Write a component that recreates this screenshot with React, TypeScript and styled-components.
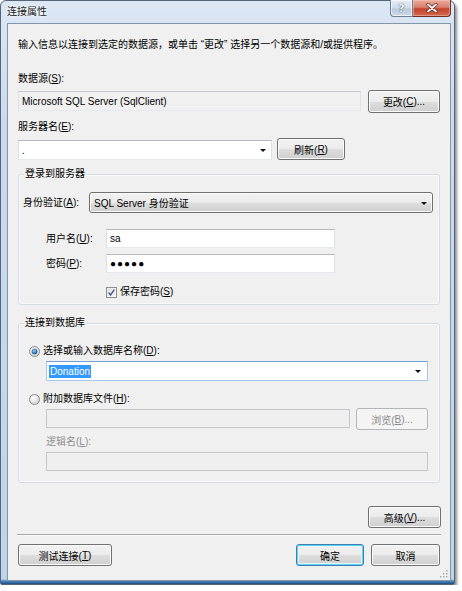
import React from "react";
import styled, { createGlobalStyle, css } from "styled-components";

const GlobalStyle = createGlobalStyle`
  html, body { margin: 0; padding: 0; background: #ffffff; }
  body {
    font-family: "Liberation Sans", "Noto Sans CJK SC", sans-serif;
    font-size: 10px;
    color: #000;
  }
  * { box-sizing: border-box; }
`;

const FONT = `"Liberation Sans", "Noto Sans CJK SC", sans-serif`;

const Window = styled.div`
  width: 455px;
  height: 585px;
  display: flex;
  flex-direction: column;
  padding: 0 3px 3px 6px;
  border: 1px solid #56667a;
  border-radius: 6px 6px 2px 2px;
  background: linear-gradient(
    to bottom,
    #dce7f4 0,
    #cbdbed 120px,
    #bfd4ea calc(100% - 5px),
    #4f86bf calc(100% - 3px),
    #1d4d84 100%
  );
  box-shadow: 2px 3px 3px rgba(0, 0, 0, 0.45);
`;

const TitleBar = styled.div`
  height: 22px;
  display: flex;
  align-items: flex-start;
`;

const Title = styled.div`
  padding-top: 4px;
  font-size: 10px;
  line-height: 14px;
  color: #1b1b1b;
  text-shadow: 0 0 5px #ffffff, 0 0 3px #ffffff;
`;

const Caption = styled.div`
  margin-left: auto;
  margin-top: -1px;
  display: flex;
`;

const CaptionButton = styled.div<{ $close?: boolean }>`
  height: 17px;
  width: ${(p) => (p.$close ? 38 : 23)}px;
  display: flex;
  align-items: center;
  justify-content: center;
  border: 1px solid ${(p) => (p.$close ? "#6b2f27" : "#6d7f94")};
  border-top: none;
  ${(p) =>
    p.$close
      ? css`
          border-radius: 0 0 4px 0;
          border-left: none;
          background: linear-gradient(#e9a99b 0%, #d8806d 45%, #c4432b 55%, #d26a4c 100%);
          box-shadow: inset 0 0 0 1px rgba(255, 210, 200, 0.45);
        `
      : css`
          border-radius: 0 0 0 4px;
          background: linear-gradient(#e4ecf5 0%, #d3dfeb 45%, #bccbdc 55%, #c9d8e8 100%);
          box-shadow: inset 0 0 0 1px rgba(255, 255, 255, 0.6);
        `}
`;

const HelpGlyph = styled.span`
  font-family: "DejaVu Sans", sans-serif;
  font-weight: bold;
  font-size: 11px;
  line-height: 11px;
  color: #f4f7fb;
  text-shadow: 0 0 1px #3d4d61, 0 0 1px #3d4d61;
`;

const Client = styled.div`
  flex: 1;
  position: relative;
  display: flex;
  flex-direction: column;
  padding: 13px 10px 0 10px;
  background: #f0f0f0;
  border: 1px solid #8395ab;
  font-family: ${FONT};
  font-size: 10px;
`;

const Text = styled.div<{ $mt?: number; $ml?: number; $disabled?: boolean }>`
  line-height: 16px;
  height: 16px;
  white-space: nowrap;
  margin-top: ${(p) => p.$mt ?? 0}px;
  margin-left: ${(p) => p.$ml ?? 0}px;
  color: ${(p) => (p.$disabled ? "#8d8d8d" : "#000")};
`;

const Row = styled.div<{ $mt?: number; $ml?: number; $gap?: number; $center?: boolean; $end?: boolean }>`
  display: flex;
  align-items: ${(p) => (p.$center ? "center" : "flex-start")};
  justify-content: ${(p) => (p.$end ? "flex-end" : "flex-start")};
  gap: ${(p) => p.$gap ?? 0}px;
  margin-top: ${(p) => p.$mt ?? 0}px;
  margin-left: ${(p) => p.$ml ?? 0}px;
`;

type BoxVariant = "normal" | "readonly" | "disabled" | "focus";

const Box = styled.div<{ $w: number; $h?: number; $variant?: BoxVariant; $mt?: number }>`
  width: ${(p) => p.$w}px;
  height: ${(p) => p.$h ?? 19}px;
  margin-top: ${(p) => p.$mt ?? 0}px;
  position: relative;
  display: flex;
  align-items: center;
  padding: 0 3px;
  white-space: nowrap;
  border: 1px solid;
  ${(p) => {
    switch (p.$variant) {
      case "readonly":
        return css`
          background: #f0f0f0;
          border-color: #c2c6cc #dfe3e8 #e5e9ee #dfe3e8;
        `;
      case "disabled":
        return css`
          background: #efefef;
          border-color: #c4c6c9;
        `;
      case "focus":
        return css`
          background: #ffffff;
          border-color: #6e9fd6 #a8c6e8 #a8c6e8 #a8c6e8;
        `;
      default:
        return css`
          background: #ffffff;
          border-color: #b3b6bc #dde1e7 #e5e9ee #dde1e7;
        `;
    }
  }}
`;

const Arrow = styled.span<{ $right?: number }>`
  position: absolute;
  right: ${(p) => p.$right ?? 5}px;
  top: 50%;
  margin-top: -1px;
  width: 0;
  height: 0;
  border-left: 3px solid transparent;
  border-right: 3px solid transparent;
  border-top: 3px solid #111;
`;

const Selected = styled.span`
  background: #3399ff;
  color: #fff;
  line-height: 13px;
  padding: 0 1px;
  margin-left: -1px;
`;

const Dots = styled.span`
  letter-spacing: 1px;
  font-size: 10px;
  margin-top: -1px;
`;

const Button = styled.div<{ $w: number; $h?: number; $primary?: boolean; $disabled?: boolean; $mt?: number }>`
  width: ${(p) => p.$w}px;
  height: ${(p) => p.$h ?? 22}px;
  margin-top: ${(p) => p.$mt ?? 0}px;
  flex-shrink: 0;
  display: flex;
  align-items: center;
  justify-content: center;
  white-space: nowrap;
  border-radius: 3px;
  border: 1px solid #707070;
  background: linear-gradient(#f2f2f2 0%, #ebebeb 50%, #dddddd 51%, #cfcfcf 100%);
  box-shadow: inset 0 0 0 1px #fbfbfb;
  color: #000;
  ${(p) =>
    p.$primary &&
    css`
      border-color: #3c7fb1;
      box-shadow: inset 0 0 0 1px #5fd0f6, inset 0 0 0 2px #e6f6fd;
    `}
  ${(p) =>
    p.$disabled &&
    css`
      border-color: #b3b6b9;
      background: #f4f4f4;
      box-shadow: none;
      color: #8a8a8a;
    `}
`;

const DropList = styled.div<{ $w: number }>`
  width: ${(p) => p.$w}px;
  height: 21px;
  position: relative;
  display: flex;
  align-items: center;
  padding: 0 4px;
  border-radius: 3px;
  border: 1px solid #707070;
  background: linear-gradient(#f2f2f2 0%, #ebebeb 50%, #dddddd 51%, #cfcfcf 100%);
  box-shadow: inset 0 0 0 1px #fbfbfb;
`;

const FieldLabel = styled.div<{ $w: number }>`
  width: ${(p) => p.$w}px;
  flex-shrink: 0;
  line-height: 16px;
  white-space: nowrap;
`;

const Group = styled.fieldset<{ $mt: number }>`
  margin: ${(p) => p.$mt}px 0 0 0;
  padding: 0;
  min-inline-size: 0;
  border: 1px solid #d3dce3;
  border-radius: 3px;
  box-shadow: inset 0 0 0 1px rgba(255, 255, 255, 0.6);
`;

const Legend = styled.legend`
  margin-left: 5px;
  padding: 0 1px;
  line-height: 16px;
  font-size: 10px;
`;

const GroupBody = styled.div<{ $pad: string }>`
  padding: ${(p) => p.$pad};
  display: flex;
  flex-direction: column;
`;

const Separator = styled.div`
  margin: 6px -1px 0 -1px;
  border-top: 1px solid #a6a6a6;
  border-bottom: 1px solid #fbfbfb;
`;

const Spacer = styled.div`
  flex: 1;
`;

const Grip = styled.svg`
  position: absolute;
  right: 2px;
  bottom: 2px;
`;

const Radio = ({ checked }: { checked?: boolean }) => (
  <svg width="11" height="11" viewBox="0 0 11 11">
    <defs>
      <radialGradient id={checked ? "rgOn" : "rgOff"} cx="0.4" cy="0.35" r="0.7">
        <stop offset="0" stopColor="#ffffff" />
        <stop offset="1" stopColor="#cfcfcf" />
      </radialGradient>
      <radialGradient id="dot" cx="0.4" cy="0.35" r="0.7">
        <stop offset="0" stopColor="#8fd0f7" />
        <stop offset="1" stopColor="#15569e" />
      </radialGradient>
    </defs>
    <circle cx="5.5" cy="5.5" r="5" fill={`url(#${checked ? "rgOn" : "rgOff"})`} stroke="#8a8a8a" />
    {checked && <circle cx="5.5" cy="5.5" r="2.6" fill="url(#dot)" stroke="#1b4f8a" strokeWidth="0.5" />}
  </svg>
);

const Check = () => (
  <svg width="11" height="11" viewBox="0 0 11 11">
    <defs>
      <linearGradient id="cb" x1="0" y1="0" x2="1" y2="1">
        <stop offset="0" stopColor="#dcdcdc" />
        <stop offset="1" stopColor="#fbfbfb" />
      </linearGradient>
    </defs>
    <rect x="0.5" y="0.5" width="10" height="10" fill="#f6f6f6" stroke="#8e8f8f" />
    <rect x="1.5" y="1.5" width="8" height="8" fill="url(#cb)" />
    <path d="M2.6 5.6 L4.5 8 L8.4 2.6" fill="none" stroke="#3f5b8e" strokeWidth="1.4" />
  </svg>
);

const RadioRow = styled.div<{ $mt: number }>`
  display: flex;
  align-items: center;
  gap: 3px;
  margin-top: ${(p) => p.$mt}px;
  height: 16px;
  line-height: 16px;
  white-space: nowrap;
`;

export default function App() {
  return (
    <>
      <GlobalStyle />
      <Window>
        <TitleBar>
          <Title>连接属性</Title>
          <Caption>
            <CaptionButton>
              <HelpGlyph>?</HelpGlyph>
            </CaptionButton>
            <CaptionButton $close>
              <svg width="12" height="10" viewBox="0 0 12 10">
                <path d="M2 1.5 L10 8.5 M10 1.5 L2 8.5" stroke="#5a1e15" strokeWidth="3.2" strokeLinecap="round" />
                <path d="M2 1.5 L10 8.5 M10 1.5 L2 8.5" stroke="#ffffff" strokeWidth="1.8" strokeLinecap="round" />
              </svg>
            </CaptionButton>
          </Caption>
        </TitleBar>
        <Client>
          <Text>输入信息以连接到选定的数据源，或单击 “更改” 选择另一个数据源和/或提供程序。</Text>

          <Text $mt={18}>
            数据源(<u>S</u>):
          </Text>
          <Row $mt={3} $gap={7}>
            <Box $w={343} $h={20} $mt={1} $variant="readonly">
              Microsoft SQL Server (SqlClient)
            </Box>
            <Button $w={72} $h={23}>
              更改(<u>C</u>)...
            </Button>
          </Row>

          <Text $mt={6}>
            服务器名(<u>E</u>):
          </Text>
          <Row $mt={3} $gap={5}>
            <Box $w={254} $h={20} $mt={2}>
              .
              <Arrow />
            </Box>
            <Button $w={68}>
              刷新(<u>R</u>)
            </Button>
          </Row>

          <Group $mt={6}>
            <Legend>登录到服务器</Legend>
            <GroupBody $pad="10px 6px 4px 4px">
              <Row $center>
                <FieldLabel $w={66}>
                  身份验证(<u>A</u>):
                </FieldLabel>
                <DropList $w={345}>
                  SQL Server 身份验证
                  <Arrow $right={5} />
                </DropList>
              </Row>
              <Row $center $mt={16} $ml={23}>
                <FieldLabel $w={60}>
                  用户名(<u>U</u>):
                </FieldLabel>
                <Box $w={229}>sa</Box>
              </Row>
              <Row $center $mt={6} $ml={23}>
                <FieldLabel $w={60}>
                  密码(<u>P</u>):
                </FieldLabel>
                <Box $w={229}>
                  <Dots>●●●●●</Dots>
                </Box>
              </Row>
              <RadioRow $mt={11} style={{ marginLeft: 83 }}>
                <Check />
                <span>
                  保存密码(<u>S</u>)
                </span>
              </RadioRow>
            </GroupBody>
          </Group>

          <Group $mt={10}>
            <Legend>连接到数据库</Legend>
            <GroupBody $pad="12px 11px 11px 10px">
              <RadioRow $mt={0}>
                <Radio checked />
                <span>
                  选择或输入数据库名称(<u>D</u>):
                </span>
              </RadioRow>
              <Row $mt={2} $ml={17}>
                <Box $w={383} $h={20} $variant="focus">
                  <Selected>Donation</Selected>
                  <Arrow $right={6} />
                </Box>
              </Row>
              <RadioRow $mt={10}>
                <Radio />
                <span>
                  附加数据库文件(<u>H</u>):
                </span>
              </RadioRow>
              <Row $mt={1} $ml={17} $gap={6}>
                <Box $w={305} $mt={1} $variant="disabled" />
                <Button $w={72} $disabled>
                  浏览(<u>B</u>)...
                </Button>
              </Row>
              <Text $mt={4} $ml={17} $disabled>
                逻辑名(<u>L</u>):
              </Text>
              <Row $mt={2} $ml={17}>
                <Box $w={383} $variant="disabled" />
              </Row>
            </GroupBody>
          </Group>

          <Row $mt={23} $end>
            <Button $w={73} style={{ marginRight: -1 }}>
              高级(<u>V</u>)...
            </Button>
          </Row>
          <Separator />
          <Row $mt={8}>
            <Button $w={94}>
              测试连接(<u>T</u>)
            </Button>
            <Spacer />
            <Button $w={68} $primary>
              确定
            </Button>
            <Button $w={69} style={{ marginLeft: 7 }}>
              取消
            </Button>
          </Row>
          <Grip width="9" height="9" viewBox="0 0 9 9">
            {[
              [7, 1],
              [7, 4],
              [4, 4],
              [7, 7],
              [4, 7],
              [1, 7],
            ].map(([x, y]) => (
              <rect key={`${x}-${y}`} x={x} y={y} width="1.5" height="1.5" fill="#a8acb2" />
            ))}
          </Grip>
        </Client>
      </Window>
    </>
  );
}
